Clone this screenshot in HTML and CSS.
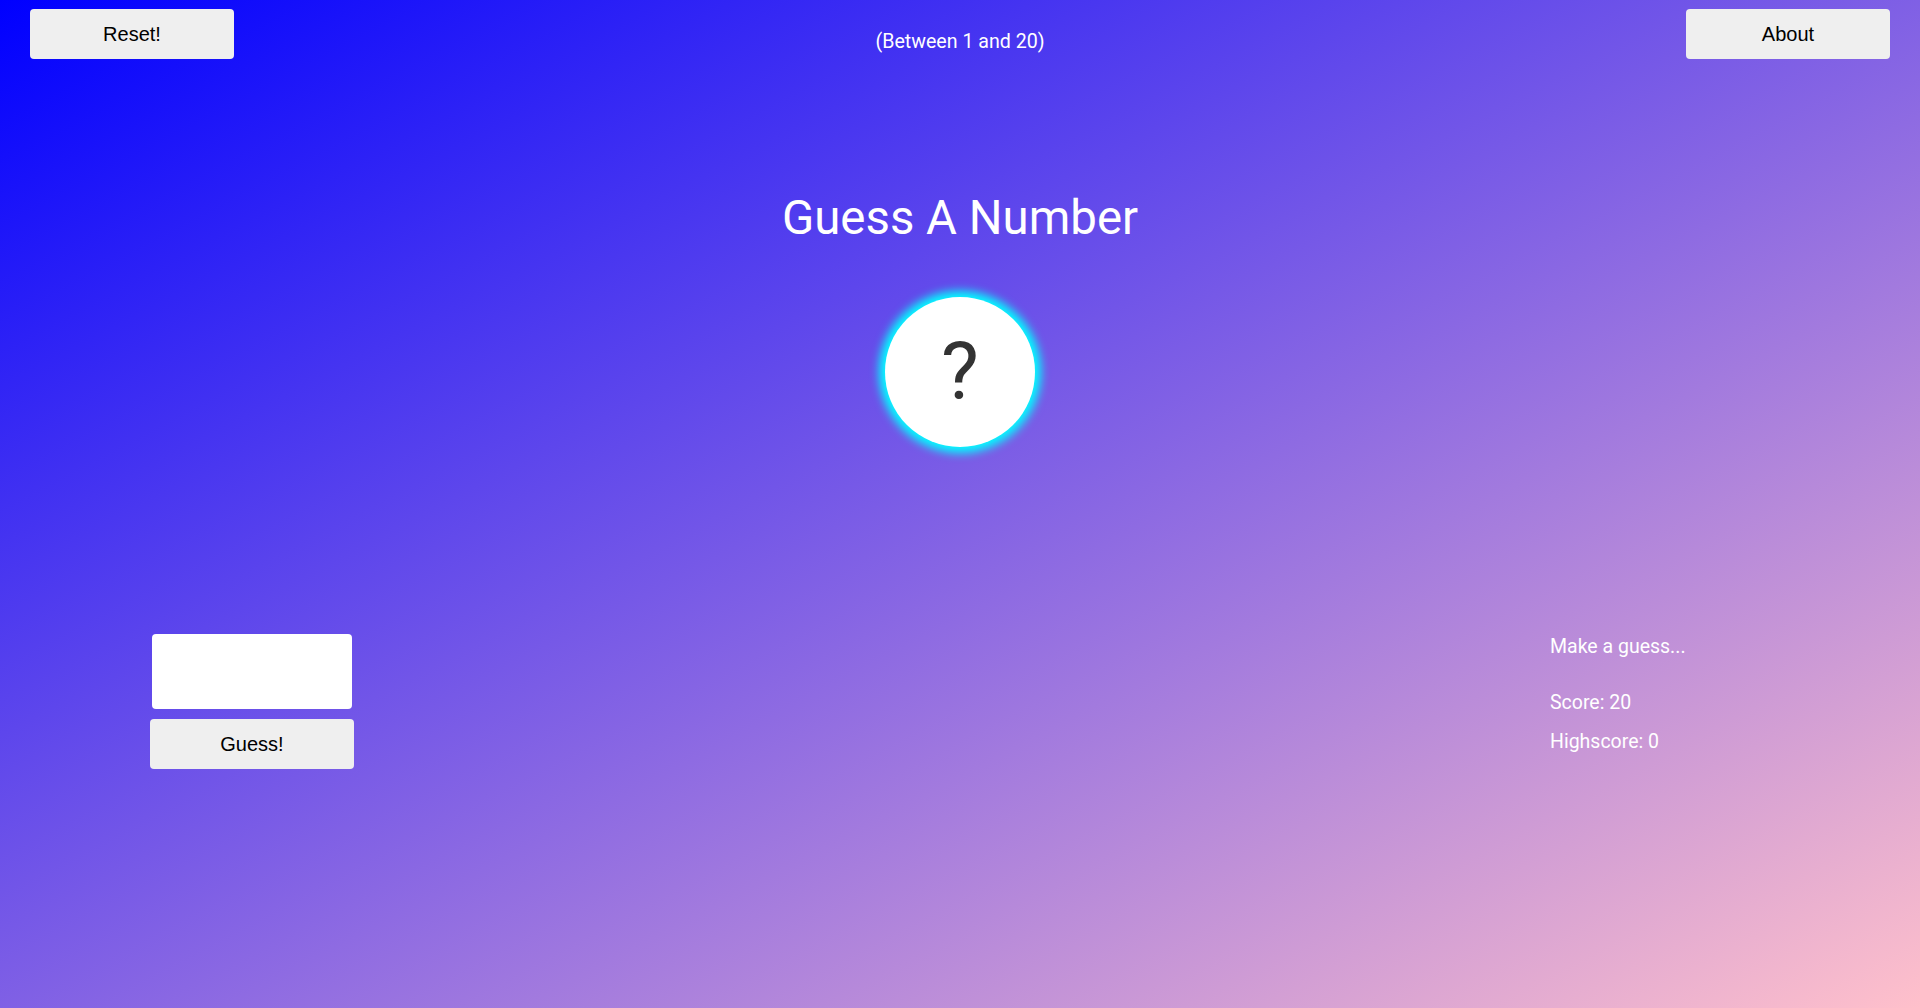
FILE: index.html
```html
<!DOCTYPE html>
<html lang="en">
<head>
<meta charset="utf-8">
<title>Guess A Number</title>
<link rel="stylesheet" href="styles.css">
</head>
<body>
<header class="top-bar">
  <button class="btn">Reset!</button>
  <p class="range">(Between 1 and 20)</p>
  <button class="btn">About</button>
</header>
<main class="game">
  <h1 class="title">Guess A Number</h1>
  <div class="secret">?</div>
  <section class="controls">
    <div class="guess-box">
      <input class="guess-input" type="number">
      <button class="btn">Guess!</button>
    </div>
    <div class="status">
      <p class="message">Make a guess...</p>
      <p class="score">Score: 20</p>
      <p class="highscore">Highscore: 0</p>
    </div>
  </section>
</main>
</body>
</html>
```
FILE: styles.css
```css
html, body {
  margin: 0;
  padding: 0;
}
body {
  width: 1920px;
  height: 1008px;
  overflow: hidden;
  background: linear-gradient(to bottom right, #0000ff, #ffc0cb);
  font-family: Roboto, "Liberation Sans", sans-serif;
  color: #ffffff;
}
.top-bar {
  display: flex;
  justify-content: space-between;
  align-items: flex-start;
  padding: 9px 30px 0;
  height: 50px;
}
.btn {
  width: 204px;
  height: 50px;
  border: none;
  border-radius: 4px;
  background: #efefef;
  color: #000;
  font-family: "Liberation Sans", Arial, sans-serif;
  font-size: 20px;
  padding: 0;
  cursor: pointer;
}
.range {
  margin: 0;
  padding-top: 21px;
  font-size: 19.6px;
  line-height: 24px;
}
.game {
  display: flex;
  flex-direction: column;
  align-items: center;
}
.title {
  margin: 131px 0 0;
  font-size: 47.4px;
  line-height: 56px;
  font-weight: 400;
}
.secret {
  margin-top: 51px;
  width: 150px;
  height: 150px;
  border-radius: 50%;
  background: #ffffff;
  box-shadow: 0 0 10px 6px #00ffff;
  color: #333333;
  font-size: 80px;
  line-height: 1;
  display: flex;
  align-items: center;
  justify-content: center;
}
.controls {
  align-self: stretch;
  margin-top: 187px;
  padding: 0 150px;
  display: flex;
  justify-content: space-between;
  align-items: flex-start;
}
.guess-box {
  width: 204px;
  display: flex;
  flex-direction: column;
  align-items: center;
  gap: 10px;
}
.guess-input {
  width: 200px;
  height: 75px;
  box-sizing: border-box;
  border: none;
  border-radius: 4px;
  background: #ffffff;
  padding: 0 10px;
  font-size: 24px;
}
.status {
  width: 220px;
  padding-top: 1px;
  font-size: 19.5px;
  line-height: 24px;
}
.status p {
  margin: 0;
}
.score {
  margin-top: 32px !important;
}
.highscore {
  margin-top: 15px !important;
}
```
